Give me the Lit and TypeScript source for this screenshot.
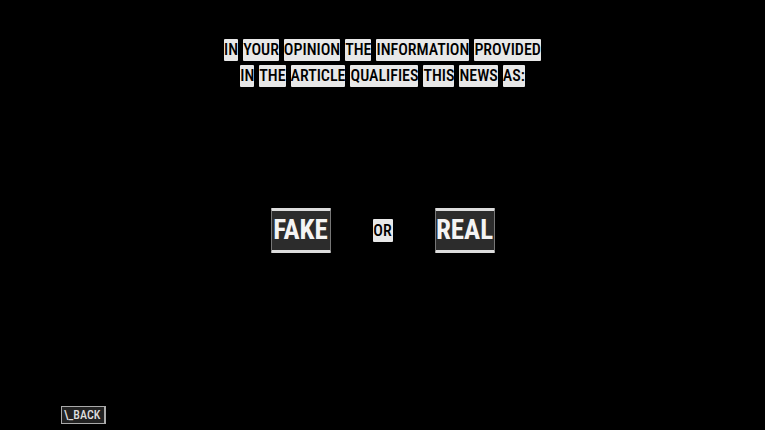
import { LitElement, html, css } from "lit";
import { customElement } from "lit/decorators.js";

const QUESTION = [
  "IN YOUR OPINION THE INFORMATION PROVIDED",
  "IN THE ARTICLE QUALIFIES THIS NEWS AS:",
];

@customElement("app-root")
export class AppRoot extends LitElement {
  static styles = css`
    :host {
      display: grid;
      grid-template-rows: 1fr auto 1fr;
      box-sizing: border-box;
      min-height: 100vh;
      padding: 36px 61px 6px;
      background: #000;
      color: #f4f4f4;
      font-family: "Roboto Condensed", "Liberation Sans Narrow", "Liberation Sans", sans-serif;
      font-weight: 500;
    }
    h1 {
      display: flex;
      flex-direction: column;
      gap: 4px;
      margin: 0;
      padding-top: 3px;
      font-size: 16px;
      font-weight: 500;
      line-height: 22px;
    }
    .line {
      display: flex;
      justify-content: center;
      gap: 5px;
    }
    .word {
      border-radius: 1px;
      background: #e8e8e8;
      color: #000;
    }
    .choices {
      display: grid;
      grid-template-columns: 60px 20px 60px;
      justify-content: center;
      align-items: center;
      gap: 42px;
    }
    button {
      box-sizing: border-box;
      margin: 0;
      padding: 0;
      font: inherit;
      color: inherit;
      cursor: pointer;
    }
    .choice {
      height: 45px;
      border: 1px solid #777;
      border-top: 3px solid #ddd;
      border-bottom: 3px solid #ddd;
      border-radius: 1px;
      background: #2c2c2c;
      font-size: 27px;
      font-weight: 700;
      line-height: 38px;
    }
    .or {
      font-size: 16px;
      line-height: 23px;
      text-align: center;
    }
    .back {
      align-self: end;
      justify-self: start;
      width: 45px;
      height: 18px;
      padding-left: 2px;
      border: 1px solid #aaa;
      border-right-width: 2px;
      background: #222;
      color: #ddd;
      font-size: 12px;
      line-height: 16px;
      text-align: left;
    }
  `;

  render() {
    return html`
      <h1>
        ${QUESTION.map(
          (line) => html`<span class="line">
            ${line.split(" ").map((word) => html`<span class="word">${word}</span> `)}
          </span>`
        )}
      </h1>
      <div class="choices">
        <button class="choice" type="button">FAKE</button>
        <span class="word or">OR</span>
        <button class="choice" type="button">REAL</button>
      </div>
      <button class="back" type="button">\\_BACK</button>
    `;
  }
}
